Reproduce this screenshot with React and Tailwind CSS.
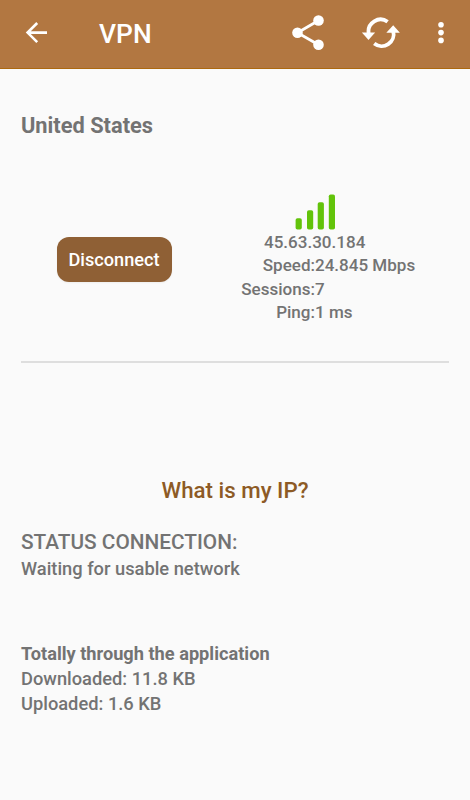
const stats = [
  { label: 'Speed:', value: '24.845 Mbps' },
  { label: 'Sessions:', value: '7' },
  { label: 'Ping:', value: '1 ms' },
]

const bars = [
  { x: 0.6, y: 24.2 },
  { x: 12, y: 16.2 },
  { x: 22.7, y: 8.2 },
  { x: 33.8, y: 0.4 },
]

function BackIcon() {
  return (
    <svg width="24" height="24" viewBox="0 0 24 24" fill="none" stroke="#fff" strokeWidth="2.6">
      <path d="M23 11.6H4M13.2 2L3.6 11.6l9.6 9.6" />
    </svg>
  )
}

function ShareIcon() {
  return (
    <svg width="36" height="40" viewBox="0 0 36 40" fill="#fff">
      <path d="M28.5 7.5L7.5 19.7l21 12" fill="none" stroke="#fff" strokeWidth="2.8" />
      <circle cx="7.5" cy="19.7" r="5.3" />
      <circle cx="28.5" cy="7.5" r="5.3" />
      <circle cx="28.5" cy="31.8" r="5.3" />
    </svg>
  )
}

function RefreshIcon() {
  return (
    <svg width="40" height="32" viewBox="0 0 40 32" fill="none" stroke="#fff" strokeWidth="3.8">
      <path d="M26.6 4.8A12 12 0 0 0 7.7 16.5" />
      <path d="M13.2 26.6A12 12 0 0 0 32.2 14" />
      <path d="M0.9 15.5H14.1L7.5 22.9Z" fill="#fff" stroke="none" />
      <path d="M25.3 15.7H38.9L32.2 8.2Z" fill="#fff" stroke="none" />
    </svg>
  )
}

function MoreIcon() {
  return (
    <svg width="8" height="24" viewBox="0 0 8 24" fill="#fff">
      <circle cx="4" cy="3.8" r="2.8" />
      <circle cx="4" cy="11.6" r="2.8" />
      <circle cx="4" cy="19.4" r="2.8" />
    </svg>
  )
}

export default function App() {
  return (
    <div className="h-[800px] w-[470px] overflow-hidden bg-[#fafafa] font-['Roboto',sans-serif] text-[18.3px] font-medium text-[#737373]">
      {/* Toolbar */}
      <header className="flex h-[69px] items-center border-b border-[#ad690f] bg-[#b27741] pb-[2px] text-white">
        <button className="ml-6"><BackIcon /></button>
        <h1 className="mt-[2px] ml-[51px] text-[26.4px] leading-none">VPN</h1>
        <div className="ml-auto flex items-center">
          <button className="mr-[35px]"><ShareIcon /></button>
          <button className="mr-[36px]"><RefreshIcon /></button>
          <button className="mr-[25px]"><MoreIcon /></button>
        </div>
      </header>

      <main className="px-[21px]">
        <h2 className="pt-[43px] text-[21.8px] leading-[28px] font-bold">United States</h2>

        {/* Server */}
        <section className="mt-[54px] flex h-[169px] border-b-2 border-[#dedede]">
          <button className="mt-[42.5px] ml-[35.5px] h-[45px] w-[115px] rounded-[12px] bg-[#8f6035] pt-[2px] text-[18.2px] text-white shadow-xs">
            Disconnect
          </button>
          <div className="ml-[49.5px] w-[190px] text-[17.05px]">
            <svg className="mb-[0.5px] ml-[74px]" width="41" height="36" viewBox="0 0 41 36" fill="#62c30a">
              {bars.map(b => (
                <rect key={b.x} x={b.x} y={b.y} width="6.2" height={35.6 - b.y} rx="1.8" />
              ))}
            </svg>
            <p className="ml-[43px] leading-[23.5px]">45.63.30.184</p>
            {stats.map(s => (
              <div key={s.label} className="flex leading-[23.5px]">
                <span className="w-[94px] shrink-0 text-right">{s.label}</span>
                <span className="whitespace-nowrap">{s.value}</span>
              </div>
            ))}
          </div>
        </section>

        <p className="mt-[113px] text-center text-[22.3px] leading-[28px] text-[#8d5a25]">What is my IP?</p>

        {/* Connection status */}
        <section className="mt-[24px]">
          <h3 className="text-[20.8px] leading-[28px]">STATUS CONNECTION:</h3>
          <p className="leading-[25px]">Waiting for usable network</p>
        </section>

        {/* Traffic */}
        <section className="mt-[61px] leading-[24.8px]">
          <h3 className="text-[18.2px] font-bold">Totally through the application</h3>
          <p>Downloaded: 11.8 KB</p>
          <p>Uploaded: 1.6 KB</p>
        </section>
      </main>
    </div>
  )
}
